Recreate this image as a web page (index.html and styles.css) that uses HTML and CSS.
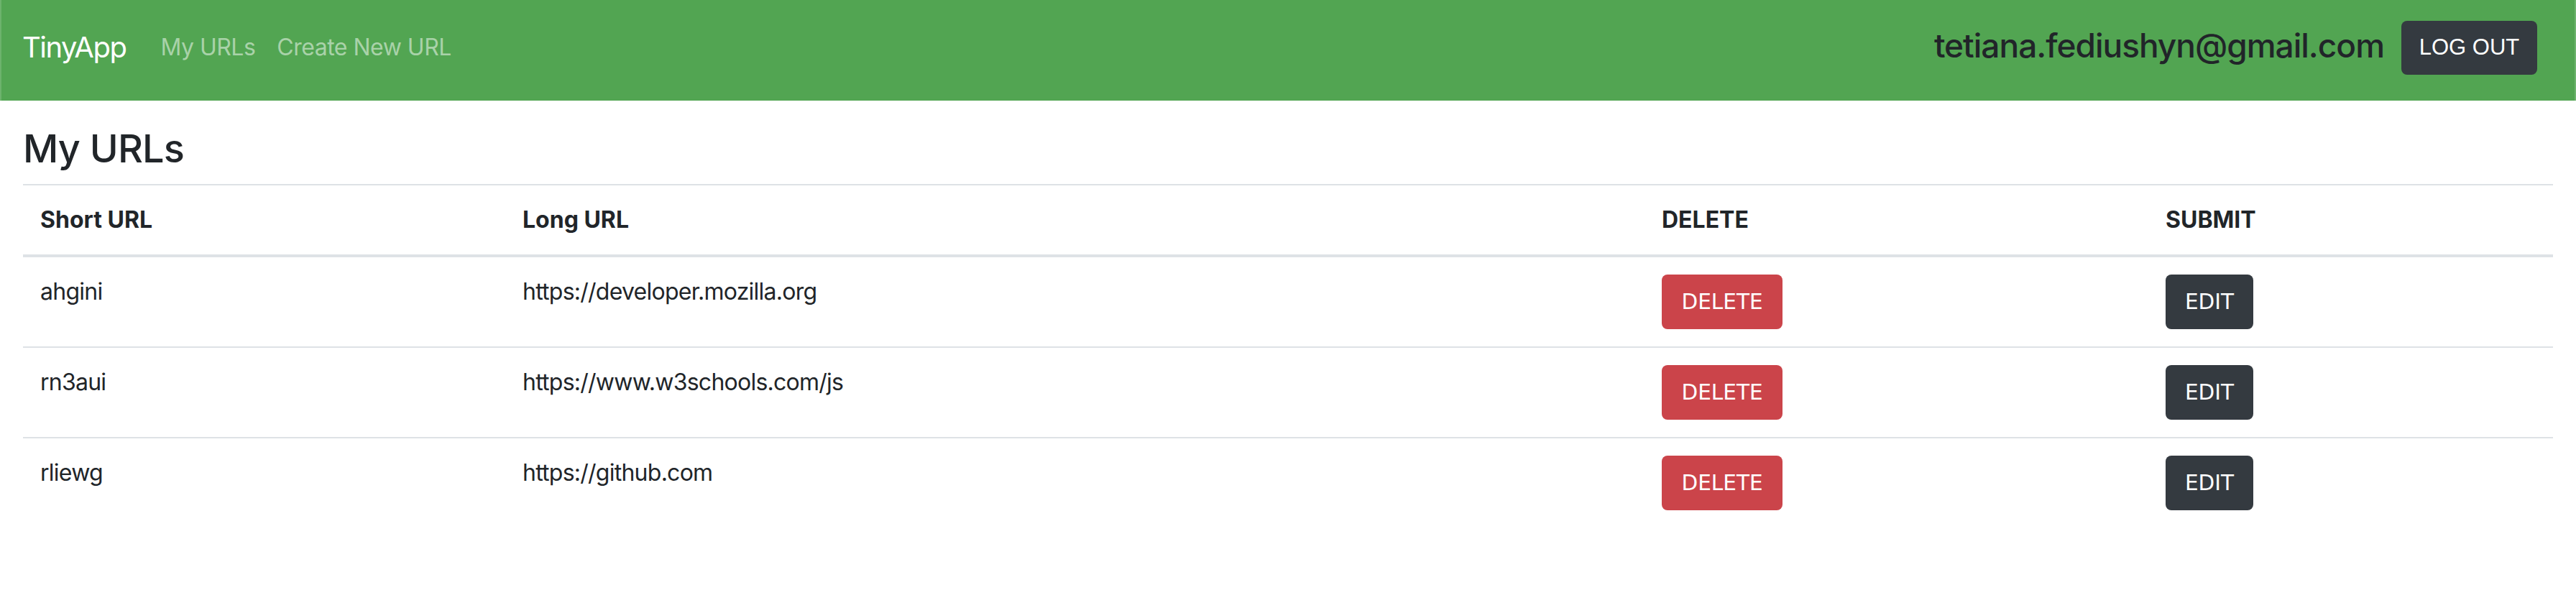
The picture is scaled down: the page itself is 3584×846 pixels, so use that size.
FILE: index.html
```html
<!DOCTYPE html>
<html lang="en">
<head>
<meta charset="utf-8">
<title>TinyApp</title>
<link rel="stylesheet" href="styles.css">
</head>
<body>
<nav class="navbar">
  <a class="brand" href="#">TinyApp</a>
  <div class="nav-links">
    <a class="nav-link" href="#">My URLs</a>
    <a class="nav-link" href="#">Create New URL</a>
  </div>
  <div class="nav-user">
    <span class="email">tetiana.fediushyn@gmail.com</span>
    <button class="btn btn-logout">LOG OUT</button>
  </div>
</nav>
<main class="container">
  <h3 class="title">My URLs</h3>
  <table class="table">
    <thead>
      <tr>
        <th class="c-short">Short URL</th>
        <th class="c-long">Long URL</th>
        <th class="c-del">DELETE</th>
        <th class="c-edit">SUBMIT</th>
      </tr>
    </thead>
    <tbody>
      <tr>
        <td>ahgini</td>
        <td>https://developer.mozilla.org</td>
        <td><button class="btn btn-danger">DELETE</button></td>
        <td><button class="btn btn-dark">EDIT</button></td>
      </tr>
      <tr>
        <td>rn3aui</td>
        <td>https://www.w3schools.com/js</td>
        <td><button class="btn btn-danger">DELETE</button></td>
        <td><button class="btn btn-dark">EDIT</button></td>
      </tr>
      <tr>
        <td>rliewg</td>
        <td>https://github.com</td>
        <td><button class="btn btn-danger">DELETE</button></td>
        <td><button class="btn btn-dark">EDIT</button></td>
      </tr>
    </tbody>
  </table>
</main>
</body>
</html>
```
FILE: styles.css
```css
* { box-sizing: border-box; }
html, body { margin: 0; padding: 0; background: #fff; }
body {
  font-family: Inter, "Noto Sans", "Liberation Sans", sans-serif;
  font-size: 32px;
  line-height: 48px;
  color: #212529;
}
a { text-decoration: none; }

.navbar {
  height: 140px;
  background: #52a552;
  display: flex;
  align-items: center;
  padding: 0 52px 8px 29px;
  border-left: 2px solid #6db36d;
  border-right: 2px solid #6db36d;
}
.brand {
  color: #fff;
  font-size: 40px;
  line-height: 60px;
  letter-spacing: -1.5px;
  margin-right: 32px;
}
.nav-links { display: flex; }
.nav-link {
  color: #a9d2a9;
  font-size: 32px;
  letter-spacing: -0.5px;
  padding: 0 16px;
}
.nav-link + .nav-link { padding-left: 14px; }
.nav-user {
  margin-left: auto;
  display: flex;
  align-items: center;
  gap: 24px;
}
.email {
  font-size: 46px;
  font-weight: 500;
  letter-spacing: -1px;
  color: #212529;
  line-height: 56px;
  margin-bottom: 6px;
}
.btn {
  border: 0;
  border-radius: 8px;
  color: #fff;
  cursor: pointer;
}
.btn-logout {
  background: #343a40;
  font-family: "Liberation Sans", Arial, sans-serif;
  font-size: 31px;
  height: 75px;
  width: 189px;
  padding: 0;
}

.container { padding: 0 32px; }
.title {
  margin: 34px 0 16px;
  font-size: 54px;
  font-weight: 500;
  letter-spacing: -0.8px;
  line-height: 66px;
}
.table {
  width: 100%;
  border-collapse: collapse;
}
.table th, .table td {
  text-align: left;
  vertical-align: top;
  padding: 24px;
  border-top: 2px solid #dee2e6;
}
.table td { letter-spacing: -0.75px; }
.table thead th {
  border-bottom: 4px solid #dee2e6;
  font-weight: 700;
}
.c-short { width: 671px; }
.c-long { width: 1585px; }
.c-del { width: 701px; }
.btn-danger, .btn-dark {
  font-family: "DejaVu Sans", sans-serif;
  font-size: 29.5px;
  letter-spacing: 0;
  height: 76px;
  padding: 0;
  display: block;
}
.btn-danger { background: #cb444a; width: 168px; }
.btn-dark { background: #343a40; width: 122px; }
```
